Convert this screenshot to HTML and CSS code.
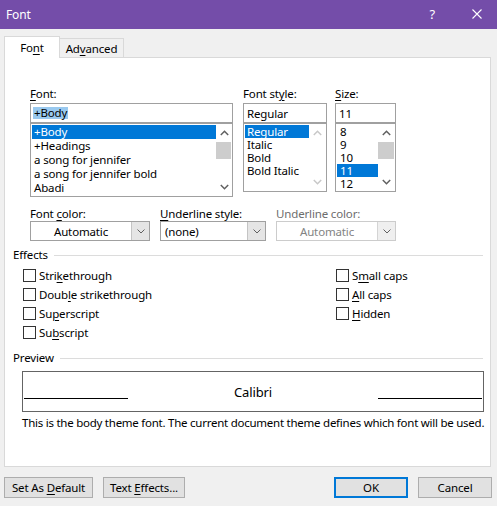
FILE: index.html
```html
<!DOCTYPE html>
<html>
<head>
<meta charset="utf-8">
<link rel="stylesheet" href="styles.css">
</head>
<body>
<div class="dialog">
  <div class="titlebar">
    <span class="title">Font</span>
    <span class="help">?</span>
    <svg class="close" width="10" height="10" viewBox="0 0 10 10"><path d="M0.5 0.5 L9.5 9.5 M9.5 0.5 L0.5 9.5" stroke="#fff" stroke-width="1.1" fill="none"/></svg>
  </div>
  <div class="main">
    <div class="tabs">
      <div class="tab active"><span>Fo<u>n</u>t</span></div>
      <div class="tab"><span>Ad<u>v</u>anced</span></div>
    </div>
    <div class="panel">
      <div class="pickers">
        <div class="col col-font">
          <div class="label"><u>F</u>ont:</div>
          <div class="input"><span class="sel-text">+Body</span></div>
          <div class="list list-font">
            <div class="items">
              <div class="item selected">+Body</div>
              <div class="item">+Headings</div>
              <div class="item">a song for jennifer</div>
              <div class="item">a song for jennifer bold</div>
              <div class="item">Abadi</div>
            </div>
            <div class="scrollbar">
              <div class="arrow"><svg width="9" height="6" viewBox="0 0 9 6"><path d="M0.8 5 L4.5 1.3 L8.2 5" stroke="#606060" stroke-width="1.5" fill="none"/></svg></div>
              <div class="track"><div class="thumb"></div></div>
              <div class="arrow"><svg width="9" height="6" viewBox="0 0 9 6"><path d="M0.8 1 L4.5 4.7 L8.2 1" stroke="#606060" stroke-width="1.5" fill="none"/></svg></div>
            </div>
          </div>
        </div>
        <div class="col col-style">
          <div class="label">Font st<u>y</u>le:</div>
          <div class="input"><span class="plain">Regular</span></div>
          <div class="list list-small">
            <div class="items">
              <div class="item item-s selected">Regular</div>
              <div class="item item-s">Italic</div>
              <div class="item item-s">Bold</div>
              <div class="item item-s">Bold Italic</div>
            </div>
            <div class="scrollbar">
              <div class="arrow"><svg width="9" height="6" viewBox="0 0 9 6"><path d="M0.8 5 L4.5 1.3 L8.2 5" stroke="#c8c8c8" stroke-width="1.5" fill="none"/></svg></div>
              <div class="track"></div>
              <div class="arrow"><svg width="9" height="6" viewBox="0 0 9 6"><path d="M0.8 1 L4.5 4.7 L8.2 1" stroke="#c8c8c8" stroke-width="1.5" fill="none"/></svg></div>
            </div>
          </div>
        </div>
        <div class="col col-size">
          <div class="label"><u>S</u>ize:</div>
          <div class="input"><span class="plain">11</span></div>
          <div class="list list-small">
            <div class="items">
              <div class="item item-s item-n">8</div>
              <div class="item item-s item-n">9</div>
              <div class="item item-s item-n">10</div>
              <div class="item item-s item-n selected">11</div>
              <div class="item item-s item-n">12</div>
            </div>
            <div class="scrollbar">
              <div class="arrow"><svg width="9" height="6" viewBox="0 0 9 6"><path d="M0.8 5 L4.5 1.3 L8.2 5" stroke="#606060" stroke-width="1.5" fill="none"/></svg></div>
              <div class="track"><div class="thumb"></div></div>
              <div class="arrow"><svg width="9" height="6" viewBox="0 0 9 6"><path d="M0.8 1 L4.5 4.7 L8.2 1" stroke="#606060" stroke-width="1.5" fill="none"/></svg></div>
            </div>
          </div>
        </div>
      </div>

      <div class="combos">
        <div class="combo-col w120">
          <div class="label">Font <u>c</u>olor:</div>
          <div class="select">
            <div class="field center"><span>Automatic</span></div>
            <div class="drop"><svg width="8" height="5" viewBox="0 0 8 5"><path d="M0.5 0.5 L4 4 L7.5 0.5" stroke="#606060" stroke-width="1" fill="none"/></svg></div>
          </div>
        </div>
        <div class="combo-col w106">
          <div class="label"><u>U</u>nderline style:</div>
          <div class="select">
            <div class="field"><span>(none)</span></div>
            <div class="drop"><svg width="8" height="5" viewBox="0 0 8 5"><path d="M0.5 0.5 L4 4 L7.5 0.5" stroke="#606060" stroke-width="1" fill="none"/></svg></div>
          </div>
        </div>
        <div class="combo-col w120">
          <div class="label disabled">Underline color:</div>
          <div class="select select-disabled">
            <div class="field center"><span>Automatic</span></div>
            <div class="drop"><svg width="8" height="5" viewBox="0 0 8 5"><path d="M0.5 0.5 L4 4 L7.5 0.5" stroke="#606060" stroke-width="1" fill="none"/></svg></div>
          </div>
        </div>
      </div>

      <div class="group-head head-effects"><span>Effects</span><div class="rule"></div></div>
      <div class="effects">
        <div class="effects-col left">
          <div class="check"><span class="box"></span><span>Stri<u>k</u>ethrough</span></div>
          <div class="check"><span class="box"></span><span>Doub<u>l</u>e strikethrough</span></div>
          <div class="check"><span class="box"></span><span>Su<u>p</u>erscript</span></div>
          <div class="check"><span class="box"></span><span>Su<u>b</u>script</span></div>
        </div>
        <div class="effects-col">
          <div class="check"><span class="box"></span><span>S<u>m</u>all caps</span></div>
          <div class="check"><span class="box"></span><span><u>A</u>ll caps</span></div>
          <div class="check"><span class="box"></span><span><u>H</u>idden</span></div>
        </div>
      </div>

      <div class="group-head head-preview"><span>Preview</span><div class="rule"></div></div>
      <div class="preview">
        <div class="pline"></div>
        <div class="ptext">Calibri</div>
        <div class="pline"></div>
      </div>
      <div class="desc">This is the body theme font. The current document theme defines which font will be used.</div>
    </div>
    <div class="footer">
      <div class="btn w89"><span>Set As <u>D</u>efault</span></div>
      <div class="btn w82 gap"><span>Text <u>E</u>ffects...</span></div>
      <div class="spacer"></div>
      <div class="btn w74 primary"><span>OK</span></div>
      <div class="btn w74 gap"><span>Cancel</span></div>
    </div>
  </div>
</div>
</body>
</html>
```

FILE: styles.css
```css
* { box-sizing: border-box; }
html, body { margin: 0; padding: 0; }
body {
  width: 497px;
  height: 506px;
  overflow: hidden;
  background: #f0f0f0;
  font-family: "Noto Sans", "Open Sans", sans-serif;
  font-size: 11.5px;
  letter-spacing: -0.15px;
  color: #000;
}
u { text-underline-offset: 2px; text-decoration-thickness: 1px; }

.titlebar {
  height: 29px;
  background: #744da9;
  color: #fff;
  display: flex;
  align-items: center;
  padding: 0 15px 0 6px;
}
.title { flex: 1; font-size: 12px; }
.help { font-size: 13px; margin-right: 37px; margin-top: -2px; }
.close { display: block; margin-top: -2px; }

.main { padding: 7px 5px 0 4px; }

.tabs { display: flex; align-items: flex-end; height: 21px; }
.tab {
  height: 19px;
  border: 1px solid #d9d9d9;
  border-bottom: none;
  background: #f0f0f0;
  display: flex;
  align-items: center;
  justify-content: center;
  width: 65px;
  margin-left: -1px;
  padding-top: 1px;
}
.tab.active {
  width: 56px;
  height: 22px;
  margin-left: 0;
  margin-bottom: -1px;
  background: #fff;
  position: relative;
  z-index: 1;
  padding-top: 0;
  padding-bottom: 1px;
}

.panel {
  width: 487px;
  height: 410px;
  border: 1px solid #d9d9d9;
  background: #fff;
}

.label { height: 15px; line-height: 15px; margin-bottom: 2px; white-space: nowrap; }
.label.disabled { color: #6d6d6d; }

.pickers { display: flex; padding: 28px 0 0 25px; align-items: flex-start; }
.col-font { width: 203px; margin-right: 10px; }
.col-style { width: 84px; margin-right: 8px; }
.col-size { width: 61px; }

.input {
  height: 20px;
  border: 1px solid #a0a0a0;
  display: flex;
  align-items: center;
  padding-left: 2px;
}
.sel-text { background: #99c9ef; line-height: 12px; padding: 0 1px; }
.plain { padding-left: 1px; }

.list {
  border: 1px solid #a0a0a0;
  display: flex;
  padding: 1px 0 0 1px;
  overflow: hidden;
}
.list-font { height: 74px; }
.list-small { height: 69px; }
.items { flex: 1; min-width: 0; }
.item { height: 14px; line-height: 14px; padding-left: 2px; white-space: nowrap; }
.item-s { height: 13px; line-height: 13px; }
.item-n { padding-left: 3px; }
.item.selected { background: #0078d7; color: #fff; }

.scrollbar {
  width: 16px;
  margin-top: -1px;
  display: flex;
  flex-direction: column;
  background: #fff;
  flex: none;
}
.list-small .scrollbar { width: 17px; }
.arrow { height: 18px; display: flex; align-items: center; justify-content: center; flex: none; }
.arrow svg { display: block; }
.track { flex: 1; }
.thumb { height: 17px; background: #cdcdcd; margin: 0 1px 0 0; }

.combos { display: flex; padding: 9px 0 0 25px; }
.combo-col { margin-right: 10px; }
.w120 { width: 120px; }
.w106 { width: 106px; }
.combo-col .label { margin-bottom: 0; }
.select {
  height: 20px;
  border: 1px solid #a0a0a0;
  display: flex;
  background: #fff;
}
.field { flex: 1; display: flex; align-items: center; padding-left: 4px; white-space: nowrap; }
.field.center { justify-content: center; padding-left: 0; }
.drop {
  width: 18px;
  background: #e5e5e5;
  border-left: 1px solid #c4c4c4;
  display: flex;
  align-items: center;
  justify-content: center;
}
.select-disabled { border-color: #cccccc; color: #838383; }
.select-disabled .drop { background: #efefef; border-left-color: #d4d4d4; }

.group-head {
  display: flex;
  align-items: center;
  height: 15px;
  margin: 6px 7px 0 8px;
}
.group-head .rule { flex: 1; height: 1px; background: #dcdcdc; margin-left: 6px; margin-top: 1px; }
.head-preview { margin-top: 8px; }

.effects { display: flex; margin: 4px 0 0 18px; }
.effects-col.left { width: 313px; }
.check { display: flex; align-items: center; height: 19px; white-space: nowrap; }
.box {
  width: 13px;
  height: 13px;
  border: 1px solid #333;
  background: #fff;
  margin-right: 3px;
  flex: none;
}

.preview {
  height: 41px;
  margin: 6px 6px 0 17px;
  border: 1px solid #646464;
  display: flex;
  align-items: center;
}
.pline { width: 104px; height: 1px; background: #000; align-self: flex-end; margin: 0 1px 12px 1px; }
.ptext { flex: 1; text-align: center; font-size: 13px; }

.desc { margin: 3px 0 0 17px; height: 15px; line-height: 15px; white-space: nowrap; letter-spacing: -0.25px; }

.footer { display: flex; padding-top: 10px; }
.btn {
  height: 21px;
  border: 1px solid #adadad;
  background: #e1e1e1;
  display: flex;
  align-items: center;
  justify-content: center;
  white-space: nowrap;
}
.btn.primary { border: 2px solid #0078d7; }
.w89 { width: 89px; }
.w82 { width: 82px; }
.w74 { width: 74px; }
.gap { margin-left: 10px; }
.spacer { flex: 1; }
```
